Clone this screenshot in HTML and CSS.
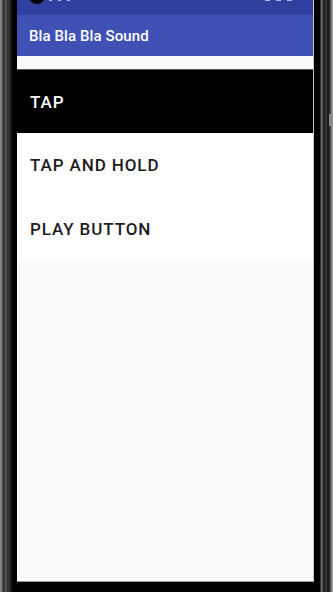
FILE: index.html
```html
<!DOCTYPE html>
<html lang="en">
<head>
<meta charset="utf-8">
<title>Bla Bla Bla Sound</title>
<link rel="stylesheet" href="styles.css">
</head>
<body>
<div class="device">
  <div class="bezel-left"></div>
  <div class="screen">
    <div class="statusbar">
      <span class="punch"></span>
      <span class="sb-left"><i></i><i></i><i></i></span>
      <span class="sb-right"><i></i><i></i><i></i></span>
    </div>
    <div class="toolbar"><span class="title">Bla Bla Bla Sound</span></div>
    <div class="strip"></div>
    <div class="list">
      <div class="row row-active">TAP</div>
      <div class="row">TAP AND HOLD</div>
      <div class="row">PLAY BUTTON</div>
    </div>
    <div class="rest"></div>
  </div>
  <div class="bezel-right"><span class="side-button"></span></div>
</div>
</body>
</html>
```
FILE: styles.css
```css
html, body {
  margin: 0;
  padding: 0;
  background: #000;
  width: 333px;
  height: 592px;
  overflow: hidden;
  font-family: Roboto, "Noto Sans", "Liberation Sans", sans-serif;
}

.device {
  display: flex;
  height: 592px;
}

.bezel-left {
  width: 17px;
  flex: none;
  background: linear-gradient(to right,
    #8c8c8c 0, #777 2px, #2b2b2b 3px, #444 5px, #5a5a5a 6px,
    #262626 8px, #3c3c3c 9px, #151515 11px, #000 13px, #000 17px);
}

.screen {
  width: 297px;
  flex: none;
  height: 582px;
  display: flex;
  flex-direction: column;
  background: #faf9fc;
  box-sizing: border-box;
  border-bottom: 1px solid #9a9a9a;
  border-right: 1px solid #c8c8c8;
}

.statusbar {
  height: 15px;
  flex: none;
  background: #3040a0;
  position: relative;
}

.punch {
  position: absolute;
  left: 12px;
  top: -12px;
  width: 16px;
  height: 16px;
  border-radius: 50%;
  background: #000;
}

.sb-left, .sb-right {
  position: absolute;
  top: 0;
  display: flex;
  gap: 6px;
}
.sb-left { left: 32px; }
.sb-right { left: 248px; }
.sb-left i, .sb-right i {
  display: block;
  width: 3px;
  height: 1px;
  background: rgba(230, 234, 255, 0.7);
}
.sb-right i { width: 5px; }

.toolbar {
  height: 41px;
  flex: none;
  background: #3f51b5;
  display: flex;
  align-items: center;
  padding-left: 12px;
  box-shadow: 0 1px 1px rgba(0,0,0,0.15);
}

.title {
  color: #fff;
  font-size: 15px;
  font-weight: 500;
  letter-spacing: 0.1px;
}

.strip {
  height: 13px;
  flex: none;
  background: #f9f9fc;
  border-bottom: 1px solid #555;
}

.list {
  display: flex;
  flex-direction: column;
  background: #fff;
}

.row {
  height: 64px;
  display: flex;
  align-items: center;
  padding-left: 13px;
  font-size: 17px;
  font-weight: 500;
  color: #1c1c1c;
  letter-spacing: 0.9px;
}

.row-active {
  height: 63px;
  background: #000;
  color: #fff;
}

.rest {
  flex: 1;
  background: #faf9fc;
}

.bezel-right {
  width: 19px;
  flex: none;
  position: relative;
  background: linear-gradient(to right,
    #000 0, #000 6px, #5e5e5e 7px, #777 8px, #2a2a2a 9px, #1a1a1a 11px,
    #4c4c4c 12px, #262626 13px, #111 14px, #3a3a3a 16px, #999 18px, #aaa 19px);
}

.side-button {
  position: absolute;
  right: 0;
  top: 114px;
  width: 4px;
  height: 12px;
  background: #8a8a8a;
}
```
